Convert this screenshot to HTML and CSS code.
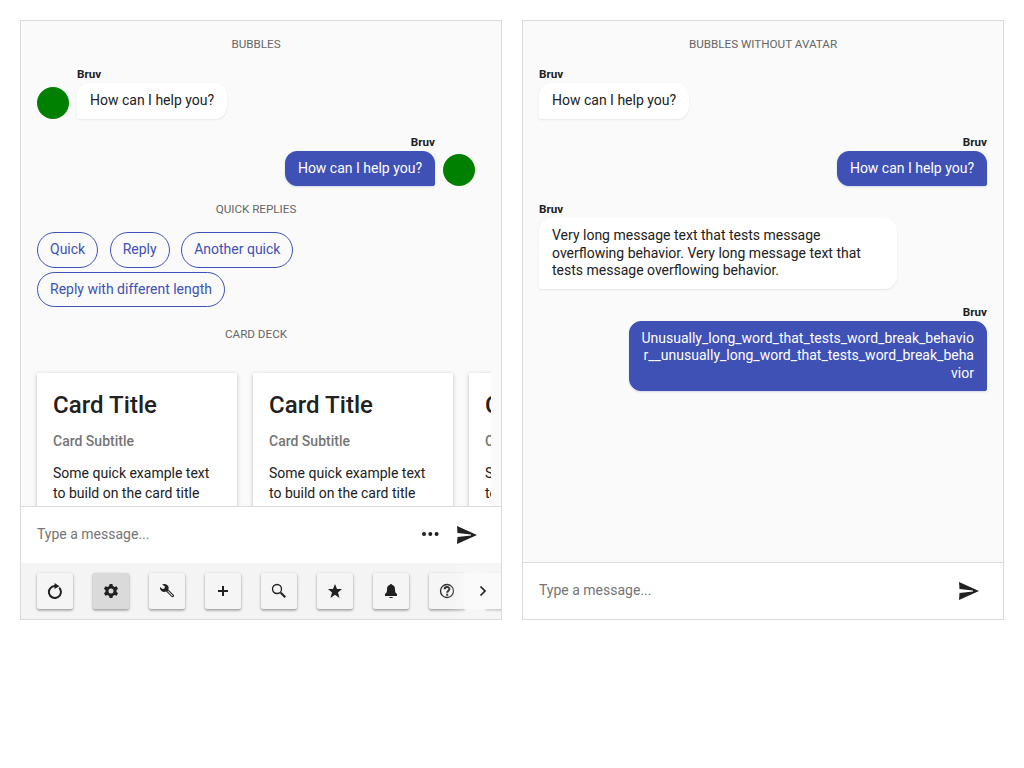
FILE: index.html
```html
<!DOCTYPE html>
<html lang="en">
<head>
<meta charset="utf-8">
<title>Chat</title>
<link rel="stylesheet" href="styles.css">
</head>
<body>
<main class="page">
  <section class="chat">
    <div class="messages messages-scroll">
      <div class="stamp">Bubbles</div>
      <div class="group">
        <span class="avatar"></span>
        <div class="stack">
          <p class="author">Bruv</p>
          <div class="bubble">How can I help you?</div>
        </div>
      </div>
      <div class="group group-alt">
        <div class="stack">
          <p class="author">Bruv</p>
          <div class="bubble">How can I help you?</div>
        </div>
        <span class="avatar"></span>
      </div>
      <div class="stamp stamp-replies">Quick replies</div>
      <div class="replies">
        <span class="reply">Quick</span>
        <span class="reply">Reply</span>
        <span class="reply">Another quick</span>
        <span class="reply">Reply with different length</span>
      </div>
      <div class="stamp stamp-deck">Card deck</div>
      <div class="deck">
        <article class="card"><h2 class="card-title">Card Title</h2><h3 class="card-subtitle">Card Subtitle</h3><p class="card-text">Some quick example text to build on the card title</p></article>
        <article class="card"><h2 class="card-title">Card Title</h2><h3 class="card-subtitle">Card Subtitle</h3><p class="card-text">Some quick example text to build on the card title</p></article>
        <article class="card"><h2 class="card-title">Card Title</h2><h3 class="card-subtitle">Card Subtitle</h3><p class="card-text">Some quick example text to build on the card title</p></article>
      </div>
    </div>
    <div class="composer">
      <span class="placeholder">Type a message...</span>
      <svg class="dots" viewBox="0 0 18 18"><circle cx="2" cy="9" r="2"/><circle cx="8.300" cy="9" r="2"/><circle cx="14.600" cy="9" r="2"/></svg>
      <svg class="send" viewBox="0 0 20 18"><path d="M0 0 20 9 0 18 .5 11 14 9.400V8.600L.5 7z"/></svg>
    </div>
    <div class="toolbar">
      <span class="tool"><svg viewBox="0 0 16 16"><path class="line" d="M12.200 4.800A6 6 0 1 1 8 3"/><path d="M7.500 0 12.500 3.200 7.500 6z"/></svg></span>
      <span class="tool tool-active"><svg viewBox="0 0 16 16"><path fill-rule="evenodd" d="M6.600 1h2.800l.5 2 1.700 1 2-.7 1.400 2.500L13.500 7.200v1.600l1.500 1.400-1.400 2.500-2-.7-1.700 1-.5 2H6.600l-.5-2-1.700-1-2 .7L1 10.200l1.500-1.400V7.200L1 5.800l1.400-2.500 2 .7 1.700-1zM8 5.500a2.500 2.500 0 1 0 0 5 2.500 2.500 0 0 0 0-5z"/></svg></span>
      <span class="tool"><svg viewBox="0 0 16 16"><path fill-rule="evenodd" d="M3 1.500C5.500.2 8.400 1 9.400 3.500c.4 1 .4 2-.1 3l5.300 5.200c.7.700.6 1.500 0 2.100s-1.500.7-2.100 0L7.200 8.500C4.500 9.500 1.700 8.500 1 5.500V4l2.500 2 2-.5.5-2zM8.400 8.300l4.900 4.900.6-.6L9 7.700z"/></svg></span>
      <span class="tool"><svg viewBox="0 0 16 16"><path d="M7 3h2v4h4v2H9v4H7V9H3V7h4z"/></svg></span>
      <span class="tool"><svg viewBox="0 0 16 16"><circle class="thin" cx="6" cy="6" r="4.500"/><path d="m9 10 1-1 1 .5 4 4-1.500 1.500-4-4z"/></svg></span>
      <span class="tool"><svg viewBox="0 0 16 16"><path d="m8 1 2 5h5l-4 3.500 1.500 5.500L8 11.700 3.500 15 5 9.500 1 6h5z"/></svg></span>
      <span class="tool"><svg viewBox="0 0 16 16"><path d="M7 1.800C7 .7 9 .7 9 1.800c2.400.7 3 2.400 3 4.700 0 2.600.6 3.800 2 4.500V13H2v-2c1.400-.7 2-1.900 2-4.500 0-2.300.6-4 3-4.700zM6 14h4c-.3 1.400-3.700 1.400-4 0z"/></svg></span>
      <span class="tool"><svg viewBox="0 0 16 16"><circle class="thin" cx="8" cy="8" r="6.500"/><path class="line" d="M5.700 6.300C5.700 3.400 10.400 3.400 10.400 6c0 1.700-2.200 1.700-2.200 3.700"/><path d="M7.200 10.700h2v2h-2z"/></svg></span>
      <span class="tool"></span>
      <span class="scroll-next"><svg viewBox="0 0 16 16"><path class="chevron" d="m5.500 3.500 4.500 4.500-4.500 4.500"/></svg></span>
    </div>
  </section>

  <section class="chat">
    <div class="messages">
      <div class="stamp">Bubbles without avatar</div>
      <div class="group">
        <div class="stack">
          <p class="author">Bruv</p>
          <div class="bubble">How can I help you?</div>
        </div>
      </div>
      <div class="group group-alt">
        <div class="stack">
          <p class="author">Bruv</p>
          <div class="bubble">How can I help you?</div>
        </div>
      </div>
      <div class="group">
        <div class="stack">
          <p class="author">Bruv</p>
          <div class="bubble">Very long message text that tests message overflowing behavior. Very long message text that tests message overflowing behavior.</div>
        </div>
      </div>
      <div class="group group-alt">
        <div class="stack">
          <p class="author">Bruv</p>
          <div class="bubble bubble-unbroken">Unusually_long_word_that_tests_word_break_behavior__unusually_long_word_that_tests_word_break_behavior</div>
        </div>
      </div>
    </div>
    <div class="composer">
      <span class="placeholder">Type a message...</span>
      <svg class="send" viewBox="0 0 20 18"><path d="M0 0 20 9 0 18 .5 11 14 9.400V8.600L.5 7z"/></svg>
    </div>
  </section>
</main>
</body>
</html>
```
FILE: styles.css
```css
* { box-sizing: border-box; }
body {
  margin: 0;
  background: #fff;
  color: #212121;
  font: 14px/20px Roboto, sans-serif;
}
p, h2, h3 { margin: 0; }
svg { display: block; fill: #212121; }
.line { fill: none; stroke: #212121; stroke-width: 2; }
.chevron { fill: none; stroke: #212121; stroke-width: 1.7; }
.thin { fill: none; stroke: #212121; stroke-width: 1.3; }

.page { display: flex; gap: 20px; padding: 20px; }
.chat {
  display: flex;
  flex-direction: column;
  width: 482px;
  height: 600px;
  border: 1px solid #dbdbdb;
  background: #fafafa;
  overflow: hidden;
}
.messages {
  flex: 1;
  min-height: 0;
  padding: 16px 16px 0;
  overflow: hidden;
}
.messages-scroll { padding-right: 26px; }

.stamp {
  height: 14.25px;
  font-size: 11.67px;
  line-height: 14.25px;
  text-align: center;
  text-transform: uppercase;
  color: #666;
}
.group {
  display: flex;
  align-items: flex-end;
  gap: 8px;
  margin-top: 16px;
}
.group-alt { justify-content: flex-end; }
.avatar {
  flex: none;
  width: 32px;
  height: 32px;
  border-radius: 50%;
  background: #008000;
}
.stack {
  display: flex;
  flex-direction: column;
  align-items: flex-start;
  max-width: 358.4px;
}
.group-alt .stack { align-items: flex-end; text-align: right; }
.author {
  height: 16px;
  font-size: 11.67px;
  font-weight: 700;
  line-height: 14px;
}
.bubble {
  max-width: 100%;
  padding: 8px 12px;
  border: 1px solid #fff;
  border-radius: 12px 12px 12px 2px;
  background: #fff;
  line-height: 17.5px;
  word-break: break-word;
  box-shadow: 0 1px 2px rgba(0, 0, 0, .08);
}
.bubble-unbroken { padding-left: 10px; }
.group-alt .bubble {
  border-color: #3f51b5;
  border-radius: 12px 12px 2px 12px;
  background: #3f51b5;
  color: #fff;
  box-shadow: 0 1px 2px rgba(63, 81, 181, .2);
}

.stamp-replies { margin-top: 16px; }
.replies {
  display: flex;
  flex-wrap: wrap;
  gap: 4px 11.5px;
  margin-top: 15.5px;
}
.reply {
  padding: 8px 12px;
  border: 1px solid #3f51b5;
  border-radius: 18px;
  color: #3f51b5;
  line-height: 17.5px;
}
.stamp-deck { margin-top: 19.5px; }
.deck {
  display: flex;
  gap: 16px;
  margin: 16px -16px 0;
  padding: 16px;
  overflow: hidden;
}
.card {
  flex: none;
  width: 200px;
  height: 210px;
  padding: 16px;
  border-radius: 2px;
  background: #fff;
  box-shadow: 0 1px 4px rgba(0, 0, 0, .24);
}
.card-title { font-size: 24px; font-weight: 500; line-height: 32px; letter-spacing: .05px; }
.card-subtitle { margin-top: 10px; font-size: 14px; font-weight: 500; line-height: 20px; color: #757575; }
.card-text { margin-top: 12px; }

.composer {
  display: flex;
  flex: none;
  align-items: center;
  height: 57px;
  padding: 0 24px 0 16px;
  border-top: 1px solid #dbdbdb;
  background: #fff;
}
.placeholder { flex: 1; padding-bottom: 2px; color: #757575; }
.dots { width: 18px; height: 18px; margin: 0 17px 2px 0; }
.send { width: 20px; height: 18px; }

.toolbar {
  position: relative;
  display: flex;
  flex: none;
  gap: 20px;
  height: 56px;
  padding: 10px 16px;
  background: #f4f4f4;
  overflow: hidden;
}
.tool {
  display: flex;
  flex: none;
  align-items: center;
  justify-content: center;
  width: 36px;
  height: 36px;
  border-radius: 2px;
  background: #f5f5f5;
  box-shadow: 0 1px 3px rgba(0, 0, 0, .3), 0 2px 2px rgba(0, 0, 0, .12);
}
.tool svg, .scroll-next svg { width: 16px; height: 16px; }
.tool-active { background: #dadada; }
.scroll-next {
  position: absolute;
  top: 10px;
  right: 0;
  display: flex;
  align-items: center;
  justify-content: center;
  width: 37px;
  height: 36px;
  background: #fafafa;
  box-shadow: 0 0 20px 5px rgba(250, 250, 250, .8);
}
```
